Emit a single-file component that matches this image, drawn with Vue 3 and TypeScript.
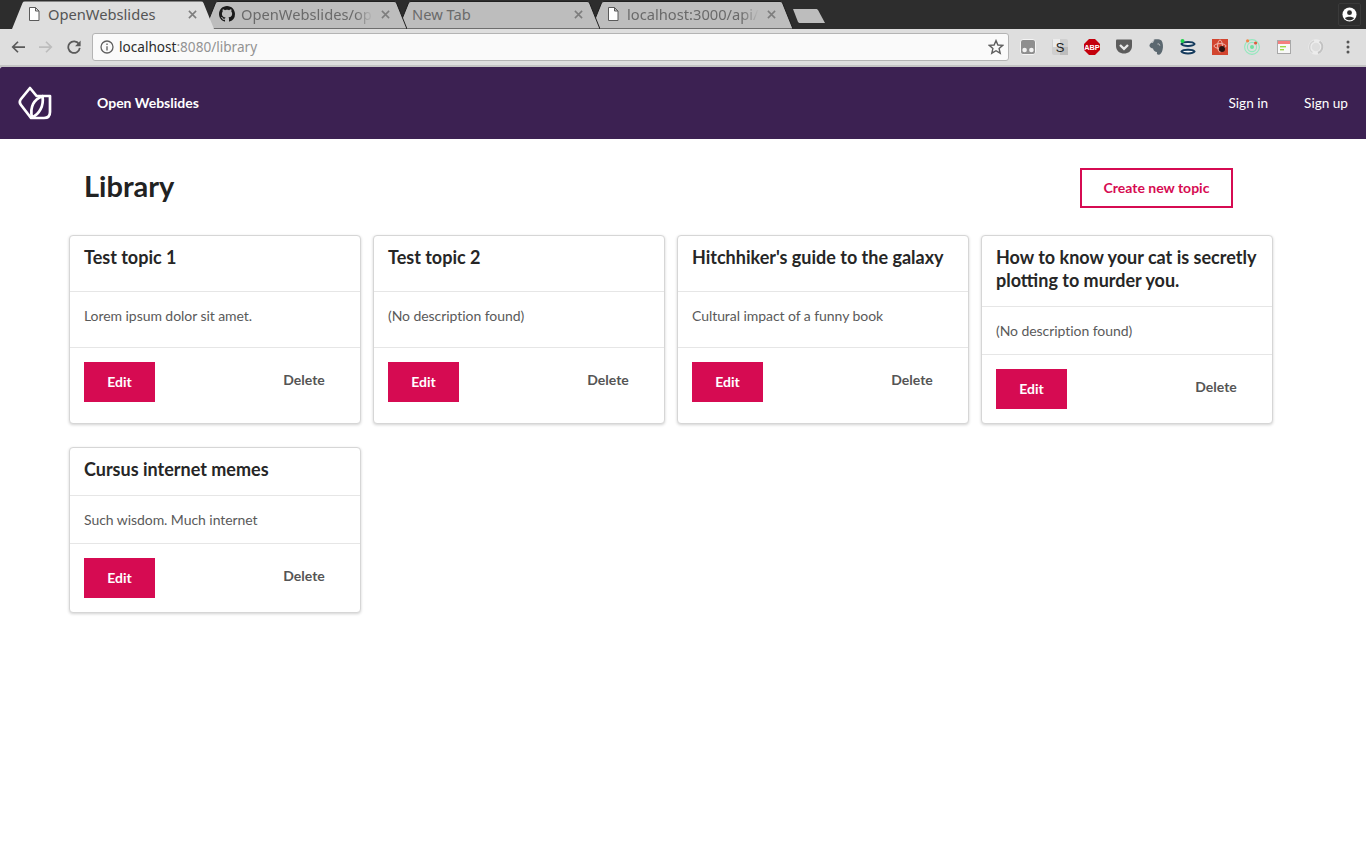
<script setup lang="ts">
interface Tab {
  title: string;
  icon: "doc" | "github" | "none";
  active?: boolean;
}

interface Topic {
  title: string;
  description: string;
}

const tabs: Tab[] = [
  { title: "OpenWebslides", icon: "doc", active: true },
  { title: "OpenWebslides/op", icon: "github" },
  { title: "New Tab", icon: "none" },
  { title: "localhost:3000/api/", icon: "doc" },
];

const topics: Topic[] = [
  { title: "Test topic 1", description: "Lorem ipsum dolor sit amet." },
  { title: "Test topic 2", description: "(No description found)" },
  { title: "Hitchhiker's guide to the galaxy", description: "Cultural impact of a funny book" },
  { title: "How to know your cat is secretly plotting to murder you.", description: "(No description found)" },
  { title: "Cursus internet memes", description: "Such wisdom. Much internet" },
];
</script>

<template>
  <div class="browser">
    <div class="tabstrip">
      <div
        v-for="(tab, i) in tabs"
        :key="tab.title"
        class="tab"
        :class="{ active: tab.active, plain: tab.icon === 'none' }"
        :style="{ zIndex: tab.active ? 9 : 8 - i }"
      >
        <svg class="tab-shape" viewBox="0 0 202 29" preserveAspectRatio="none">
          <path d="M0 29 L10.5 2 Q11 .5 13 .5 H189 Q191 .5 191.5 2 L202 29 Z" />
        </svg>
        <svg v-if="tab.icon === 'doc'" class="tab-icon doc" viewBox="0 0 12 14">
          <path d="M1.5 .5 H7.5 L11 4 V13.5 H1.5 Z M7.5 .5 V4 H11" />
        </svg>
        <svg v-if="tab.icon === 'github'" class="tab-icon github" viewBox="0 0 16 16">
          <path d="M8 0C3.58 0 0 3.58 0 8c0 3.54 2.29 6.53 5.47 7.59.4.07.55-.17.55-.38 0-.19-.01-.82-.01-1.49-2.01.37-2.53-.49-2.69-.94-.09-.23-.48-.94-.82-1.13-.28-.15-.68-.52-.01-.53.63-.01 1.08.58 1.23.82.72 1.21 1.87.87 2.33.66.07-.52.28-.87.51-1.07-1.78-.2-3.64-.89-3.64-3.95 0-.87.31-1.59.82-2.15-.08-.2-.36-1.02.08-2.12 0 0 .67-.21 2.2.82.64-.18 1.32-.27 2-.27s1.36.09 2 .27c1.53-1.04 2.2-.82 2.2-.82.44 1.1.16 1.92.08 2.12.51.56.82 1.27.82 2.15 0 3.07-1.87 3.75-3.65 3.95.29.25.54.73.54 1.48 0 1.07-.01 1.93-.01 2.2 0 .21.15.46.55.38A8.01 8.01 0 0 0 16 8c0-4.42-3.58-8-8-8z" />
        </svg>
        <span class="tab-title">{{ tab.title }}</span>
        <svg class="tab-close" viewBox="0 0 10 10">
          <path d="M1 1 L9 9 M9 1 L1 9" />
        </svg>
      </div>
      <svg class="new-tab" viewBox="0 0 34 15">
        <path d="M1 1 H24 C25 1 25.5 1.5 26 2 L33 15 H8 C7 15 6.5 14.5 6 14 Z" />
      </svg>
      <div class="profile">
        <svg viewBox="0 0 16 16">
          <circle cx="8" cy="8" r="7.5" fill="#fff" />
          <circle cx="8" cy="6" r="2.6" fill="#2d2d2d" />
          <path d="M3.2 12 C4.4 9.8 11.6 9.8 12.8 12 C11.6 13.6 10 14.2 8 14.2 C6 14.2 4.4 13.6 3.2 12 Z" fill="#2d2d2d" />
        </svg>
      </div>
    </div>

    <div class="toolbar">
      <svg class="nav-btn" viewBox="0 0 16 16">
        <path d="M16 8 H2 M8 2 L2 8 L8 14" />
      </svg>
      <svg class="nav-btn disabled" viewBox="0 0 16 16">
        <path d="M0 8 H14 M8 2 L14 8 L8 14" />
      </svg>
      <svg class="nav-btn" viewBox="0 0 16 16">
        <path d="M13.6 4.6 A6.6 6.6 0 1 0 14.6 9" />
        <path class="solid" d="M15.6 .6 V7 H9.2 Z" />
      </svg>
      <div class="omnibox">
        <svg class="info" viewBox="0 0 14 14">
          <circle cx="7" cy="7" r="6" />
          <path d="M7 6.2 V10.4 M7 3.6 V5" />
        </svg>
        <span class="url">localhost<span class="url-rest">:8080/library</span></span>
        <svg class="star" viewBox="0 0 16 16">
          <path d="M8 1.6 L9.9 6 L14.7 6.4 L11.1 9.5 L12.2 14.2 L8 11.7 L3.8 14.2 L4.9 9.5 L1.3 6.4 L6.1 6 Z" />
        </svg>
      </div>
      <div class="extensions">
        <svg viewBox="0 0 16 16">
          <rect x=".5" y=".5" width="15" height="15" rx="2.5" fill="#8f8f8f" stroke="#f4f4f4" />
          <circle cx="4.6" cy="11" r="2.3" fill="#f2f2f2" />
          <circle cx="11.4" cy="11" r="2.3" fill="#f2f2f2" />
        </svg>
        <svg viewBox="0 0 16 16">
          <rect width="16" height="16" rx="2" fill="#cfcfcf" />
          <rect x="1" y="0" width="7" height="8" fill="#ececec" />
          <rect x="8" y="8" width="8" height="8" fill="#bdbdbd" />
          <text x="8" y="13" class="ext-s">S</text>
        </svg>
        <svg viewBox="0 0 16 16">
          <path d="M5 0 H11 L16 5 V11 L11 16 H5 L0 11 V5 Z" fill="#c4000c" />
          <text x="8" y="11" class="ext-abp">ABP</text>
        </svg>
        <svg viewBox="0 0 16 16">
          <path d="M0 1.5 Q0 .5 1 .5 H15 Q16 .5 16 1.5 V7 C16 12 12 14.5 8 14.5 C4 14.5 0 12 0 7 Z" fill="#5c5c5c" />
          <path d="M4 6 L8 9.8 L12 6" fill="none" stroke="#e8e8e8" stroke-width="2.4" />
        </svg>
        <svg viewBox="0 0 16 16">
          <path d="M4 3.5 L6 .5 C9 0 12 .2 13.5 1.5 C15 4 15.5 8 14.5 11 C14 13.5 12.5 15.8 10.5 15.8 C9 15.8 8.6 14.5 9 13 C7 13 5.5 11.5 5 9.5 C3.5 9.5 2 8.5 1.5 7 C1.2 5.5 2.5 4 4 3.5 Z" fill="#5b6870" />
          <path d="M4.4 4 L6 .8 M9.5 5 C10.8 4.6 11.6 5.2 11.8 6.6" fill="none" stroke="#dedede" stroke-width=".8" />
        </svg>
        <svg viewBox="0 0 16 16">
          <path d="M5 7.2 H11 L9 9 L11 10.4 H5 L7 9 Z" fill="#d0d4d8" />
          <path d="M1.5 5 C3 2.4 13 2.4 14.5 5 C13 7.6 3 7.6 1.5 5 Z M1.5 12.5 C3 10 13 10 14.5 12.5 C13 15 3 15 1.5 12.5 Z" fill="#f4f6f8" stroke="#143a5c" stroke-width="2" />
          <circle cx="2.5" cy="2" r="2" fill="#1fd14b" />
        </svg>
        <svg viewBox="0 0 16 16">
          <rect width="16" height="16" fill="#d2452f" />
          <ellipse cx="8" cy="7" rx="6" ry="2.4" fill="none" stroke="#f3c4bb" stroke-width=".9" />
          <ellipse cx="8" cy="7" rx="2.4" ry="6" fill="none" stroke="#f3c4bb" stroke-width=".9" />
          <circle cx="10" cy="10" r="3" fill="#2a1512" />
        </svg>
        <svg viewBox="0 0 16 16">
          <circle cx="8" cy="8" r="7.4" fill="none" stroke="#92e8bd" stroke-width="1.1" />
          <circle cx="8" cy="8" r="4.6" fill="none" stroke="#92e8bd" stroke-width="1.1" />
          <circle cx="8" cy="8" r="2" fill="#6fe09f" />
          <circle cx="3.6" cy="1.8" r="1.6" fill="#f2854a" />
          <circle cx="11.6" cy="4" r="1.6" fill="#e2583e" />
        </svg>
        <svg viewBox="0 0 16 16">
          <rect x=".5" y=".5" width="13" height="13" transform="translate(1 1)" fill="#f8f8f8" stroke="#a8a8a8" />
          <rect x="2" y="2" width="12" height="3" fill="#f47f7f" />
          <rect x="4" y="7" width="6" height="1.4" fill="#9ed64a" />
          <rect x="4" y="10" width="4" height="1.4" fill="#9ed64a" />
        </svg>
        <svg viewBox="0 0 16 16">
          <circle cx="8" cy="8" r="6" fill="none" stroke="#ececec" stroke-width="3.4" />
          <path d="M11.5 2.5 A6.5 6.5 0 0 1 10 14" fill="none" stroke="#c2c2c2" stroke-width="2" />
          <path d="M4.5 13.5 A6.5 6.5 0 0 1 6 2" fill="none" stroke="#d2d2d2" stroke-width="1.4" />
        </svg>
        <svg viewBox="0 0 16 16">
          <circle cx="8" cy="3" r="1.5" fill="#555" />
          <circle cx="8" cy="8" r="1.5" fill="#555" />
          <circle cx="8" cy="13" r="1.5" fill="#555" />
        </svg>
      </div>
    </div>

    <header class="navbar">
      <svg class="logo" viewBox="0 0 34 34">
        <path d="M18 10 H32 V26 Q32 32 26 32 H13 L3 19 Q.6 16 3 13 L12 2 L19 10.5" />
        <path d="M24.5 10.2 C16 13 11.6 21 14 31.5 C21.5 28 26 20 24.5 10.2 Z" />
      </svg>
      <a class="brand">Open Webslides</a>
      <a class="nav-link sign-in">Sign in</a>
      <a class="nav-link">Sign up</a>
    </header>

    <main class="page">
      <div class="page-head">
        <h1>Library</h1>
        <button class="btn-create">Create new topic</button>
      </div>
      <div class="cards">
        <article v-for="topic in topics" :key="topic.title" class="card">
          <div class="card-head">
            <h3>{{ topic.title }}</h3>
          </div>
          <div class="card-body">{{ topic.description }}</div>
          <div class="card-foot">
            <button class="btn-edit">Edit</button>
            <button class="btn-delete">Delete</button>
          </div>
        </article>
      </div>
    </main>
  </div>
</template>

<style>
html,
body {
  margin: 0;
  height: 856px;
  overflow: hidden;
  background: #fff;
}
</style>

<style scoped>
.browser {
  display: flex;
  flex-direction: column;
  height: 856px;
  font-family: Lato, "Liberation Sans", sans-serif;
}

/* window chrome */
.tabstrip {
  position: relative;
  display: flex;
  align-items: flex-end;
  flex: none;
  height: 29px;
  padding-left: 12px;
  background: #2d2d2d;
  box-sizing: border-box;
}

.tab {
  position: relative;
  display: flex;
  align-items: center;
  flex: none;
  width: 202px;
  height: 28px;
  margin-right: -9px;
  padding: 0 15px 2px 16px;
  box-sizing: border-box;
  font: 14.7px "Noto Sans", "Open Sans", sans-serif;
  color: #6a6a6a;
}

.tab-shape {
  position: absolute;
  inset: 0;
  width: 100%;
  height: 100%;
  fill: #bdbdbd;
  stroke: #1d1d1d;
  stroke-width: 1;
}

.tab.active {
  color: #555;
}

.tab.active .tab-shape {
  fill: #dedede;
  stroke: none;
}

.tab-icon {
  position: relative;
  flex: none;
  width: 12px;
  height: 14px;
  margin-right: 8px;
}

.tab-icon.doc {
  fill: #fff;
  stroke: #5a5a5a;
  stroke-width: 1;
}

.tab-icon.github {
  width: 16px;
  height: 16px;
  margin-left: -2px;
  margin-right: 6px;
  fill: #1b1b1b;
}

.tab.plain {
  padding-left: 14px;
}

.tab-title {
  position: relative;
  flex: 1;
  min-width: 0;
  white-space: nowrap;
  -webkit-mask-image: linear-gradient(to left, transparent 0, #000 18px);
  mask-image: linear-gradient(to left, transparent 0, #000 18px);
}

.tab.active .tab-title,
.tab.plain .tab-title {
  -webkit-mask-image: none;
  mask-image: none;
}

.tab-close {
  position: relative;
  flex: none;
  width: 9px;
  height: 9px;
  margin-left: 8px;
  margin-right: 2px;
  fill: none;
  stroke: #7d7d7d;
  stroke-width: 1.7;
}

.new-tab {
  position: relative;
  width: 34px;
  height: 15px;
  margin-left: 8px;
  margin-bottom: 6px;
  fill: #bdbdbd;
}

.profile {
  position: absolute;
  top: 3px;
  right: 5px;
  display: flex;
  align-items: center;
  justify-content: center;
  width: 21px;
  height: 21px;
  border: 1px solid #3a3a3a;
  border-radius: 2px;
}

.profile svg {
  width: 15px;
  height: 15px;
}

.toolbar {
  display: flex;
  align-items: center;
  flex: none;
  height: 36px;
  padding-left: 11px;
  background: #dedede;
  border-bottom: 2px solid #c4c4c4;
}

.nav-btn {
  flex: none;
  width: 14px;
  height: 14px;
  margin-right: 14px;
  fill: none;
  stroke: #5a5a5a;
  stroke-width: 2;
}

.nav-btn.disabled {
  stroke: #bdbdbd;
}

.nav-btn .solid {
  fill: #5a5a5a;
  stroke: none;
}

.omnibox {
  display: flex;
  align-items: center;
  flex: none;
  width: 917px;
  height: 28px;
  margin-left: -3px;
  padding: 0 1px 0 7px;
  box-sizing: border-box;
  background: #fafafa;
  border: 1px solid #b4b4b4;
  border-radius: 3px;
}

.info {
  width: 14px;
  height: 14px;
  margin-right: 5px;
  fill: none;
  stroke: #5f5f5f;
  stroke-width: 1.3;
}

.url {
  flex: 1;
  padding-bottom: 1px;
  font: 13.6px "Noto Sans", "Open Sans", sans-serif;
  color: #2b2b2b;
}

.url-rest {
  color: #939393;
}

.star {
  width: 16px;
  height: 16px;
  margin-right: 3px;
  fill: none;
  stroke: #5f5f5f;
  stroke-width: 1.4;
}

.extensions {
  display: flex;
  gap: 16px;
  margin-left: 11px;
}

.extensions svg {
  flex: none;
  width: 16px;
  height: 16px;
}

.ext-s {
  font: 400 13px "Liberation Sans", sans-serif;
  fill: #222;
  text-anchor: middle;
}

.ext-abp {
  font: 700 7.4px "Liberation Sans", sans-serif;
  fill: #fff;
  text-anchor: middle;
}

/* app */
.navbar {
  display: flex;
  align-items: center;
  flex: none;
  height: 72px;
  padding: 0 18px;
  background: #3c2152;
  border-top-left-radius: 2px;
  color: #fff;
}

.logo {
  flex: none;
  width: 34px;
  height: 34px;
  margin-right: 45px;
  fill: none;
  stroke: #fff;
  stroke-width: 2.7;
  stroke-linejoin: round;
}

.brand {
  flex: 1;
  margin-bottom: 2px;
  font-size: 14px;
  font-weight: 700;
}

.nav-link {
  margin-bottom: 1px;
  font-size: 13.6px;
}

.sign-in {
  margin-right: 36px;
}

.page {
  flex: 1;
  padding: 0 93px 0 69px;
}

.page-head {
  display: flex;
  align-items: center;
  justify-content: space-between;
  height: 96px;
  padding: 0 40px 0 15px;
}

.page-head h1 {
  margin: 0 0 4px;
  font-size: 29px;
  font-weight: 700;
  color: #222;
}

.btn-create {
  width: 153px;
  height: 40px;
  margin-top: 2px;
  padding: 0 0 2px;
  background: #fff;
  border: 2px solid #d60b52;
  font: 700 14px Lato, sans-serif;
  color: #d60b52;
}

.cards {
  display: grid;
  grid-template-columns: repeat(4, 292px);
  gap: 23px 12px;
}

.card {
  display: flex;
  flex-direction: column;
  background: #fff;
  border: 1px solid #d6d6d6;
  border-radius: 4px;
  box-shadow: 0 1px 3px rgba(0, 0, 0, .18);
}

.card-head,
.card-body,
.card-foot {
  flex: 1 1 auto;
  padding-left: 14px;
  padding-right: 14px;
}

.card-head {
  padding-top: 10px;
  padding-bottom: 13.6px;
  border-bottom: 1px solid #e6e6e6;
}

.card-head h3 {
  margin: 0;
  font-size: 18px;
  font-weight: 700;
  line-height: 23.4px;
  color: #262626;
}

.card-body {
  padding-top: 14px;
  padding-bottom: 13px;
  border-bottom: 1px solid #e6e6e6;
  font-size: 14px;
  line-height: 20px;
  letter-spacing: -.06px;
  color: #5a5a5a;
}

.card-foot {
  display: flex;
  align-items: flex-start;
  justify-content: space-between;
  padding-top: 14px;
  padding-bottom: 14px;
}

.btn-edit {
  width: 71px;
  height: 40px;
  padding: 0 0 1px;
  background: #d60b52;
  border: 0;
  font: 700 14px Lato, sans-serif;
  color: #fff;
}

.btn-delete {
  width: 84px;
  height: 35px;
  padding: 0;
  background: none;
  border: 0;
  font: 700 14px Lato, sans-serif;
  color: #555;
}
</style>
